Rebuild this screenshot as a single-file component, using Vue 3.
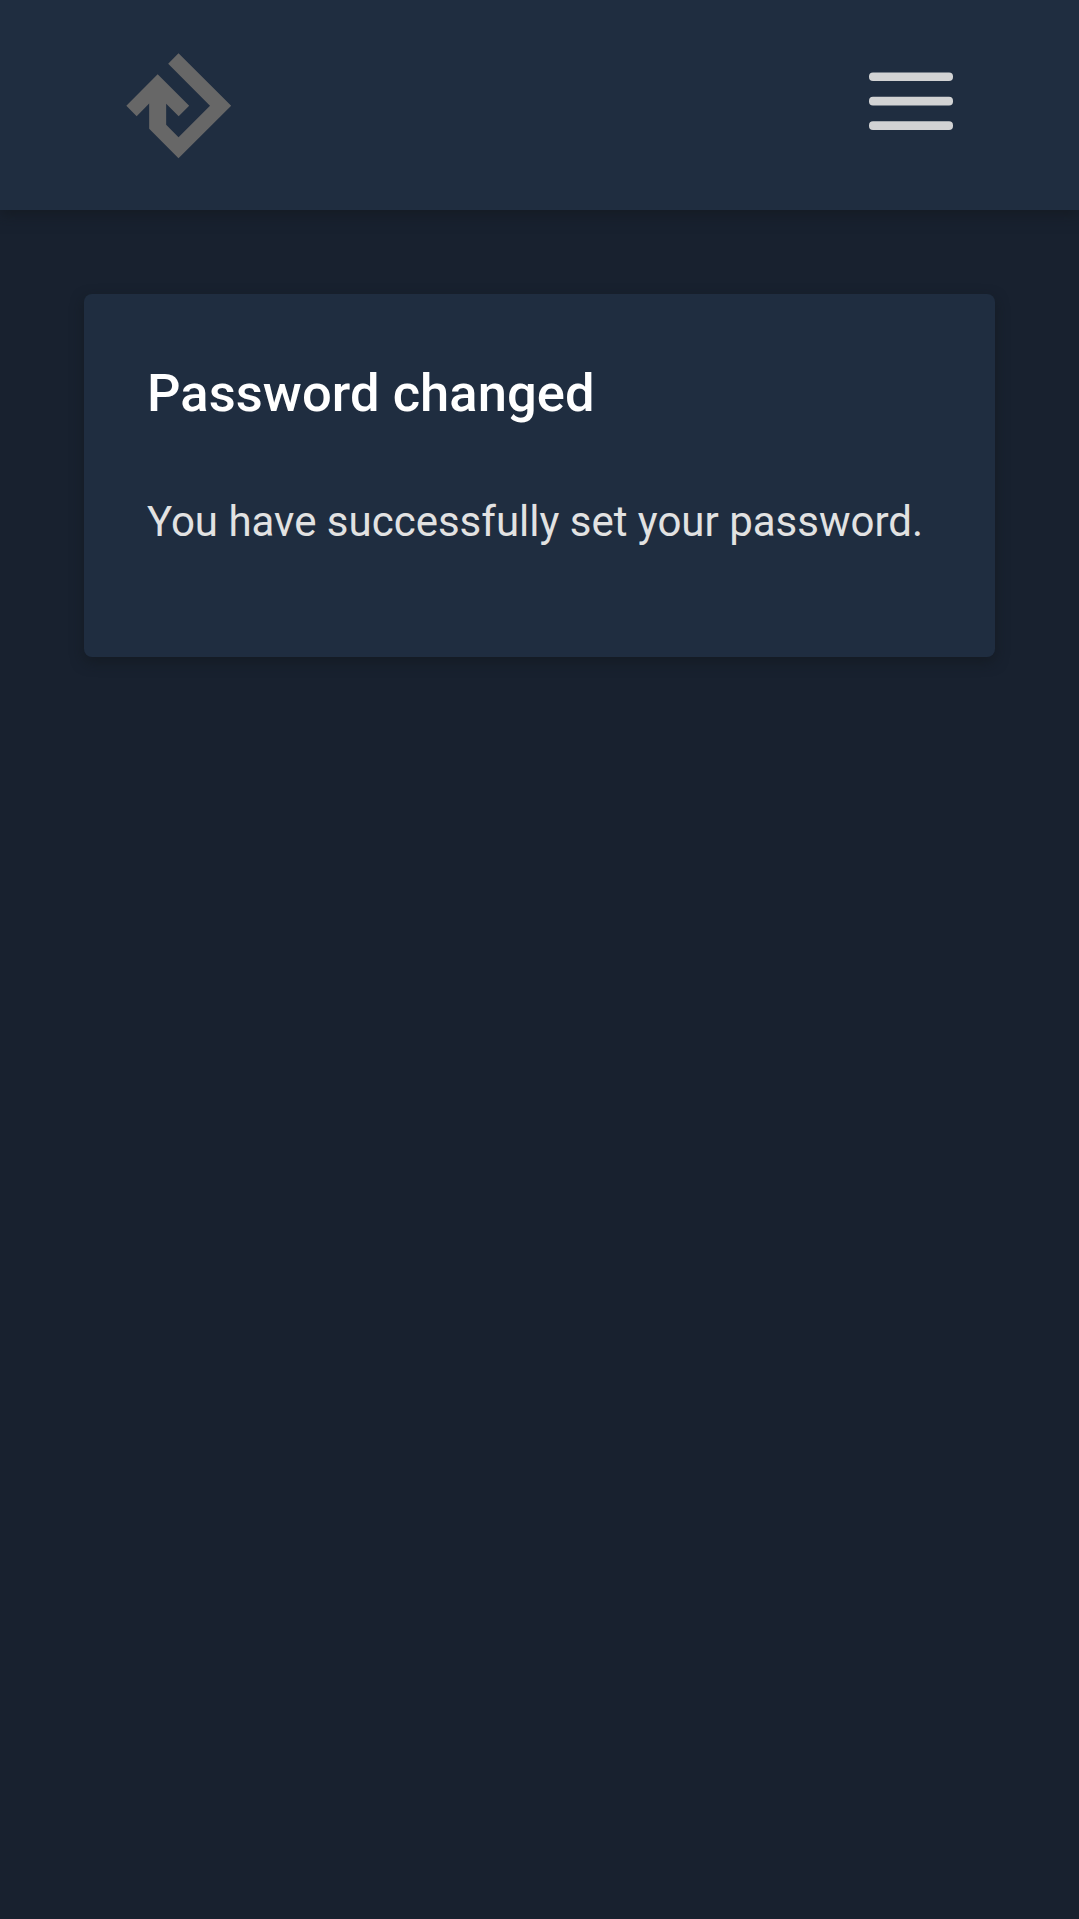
<script setup>
const title = 'Password changed'
const message = 'You have successfully set your password.'
const bars = [0, 24.4, 48.8]
</script>

<template>
  <div class="page">
    <header class="navbar">
      <a class="brand" aria-label="Home">
        <svg viewBox="-1 -0.5 315 315" width="105" height="105">
          <path d="M156.500 0 314.500 157.500 156.500 315.500 68.500 227V151L31 189 0 158 94 63.500 188.500 157.500 157 189 119.500 151.500V214.500L156.500 252 251 157.500 125.500 31.500Z" />
        </svg>
      </a>
      <button class="menu" aria-label="Menu">
        <svg viewBox="0 -0.4 84 59" width="84" height="59">
          <rect v-for="y in bars" :key="y" x="0" :y="y" width="84" height="8.7" rx="4" />
        </svg>
      </button>
    </header>
    <main class="content">
      <section class="card">
        <h1>{{ title }}</h1>
        <p>{{ message }}</p>
      </section>
    </main>
  </div>
</template>

<style>
body {
  background: #18212f;
}
</style>

<style scoped>
.page {
  min-height: 1919px;
  background: #18212f;
  font-family: Roboto, "Liberation Sans", sans-serif;
}
.navbar {
  box-sizing: border-box;
  height: 210px;
  padding: 0 126px;
  display: flex;
  align-items: center;
  justify-content: space-between;
  background: #1f2d40;
  box-shadow: 0 5px 13px rgba(18, 24, 29, 0.6);
}
.brand {
  display: block;
  height: 105px;
}
.brand svg {
  display: block;
  overflow: visible;
  fill: #676767;
}
.menu {
  width: 84px;
  height: 59px;
  margin: 0 0 7px;
  padding: 0;
  border: 0;
  background: none;
}
.menu svg {
  display: block;
  fill: #d2d3d4;
}
.content {
  padding: 84px;
}
.card {
  box-sizing: border-box;
  height: 363px;
  padding: 63px 0 0 63px;
  border-radius: 8px;
  background: #1f2d40;
  box-shadow: 0 5px 13px rgba(18, 24, 29, 0.6);
}
h1 {
  margin: 0;
  font-size: 52.5px;
  line-height: 72px;
  font-weight: 500;
  letter-spacing: 0.07px;
  color: #fff;
  white-space: nowrap;
}
p {
  margin: 61px 0 0;
  font-size: 42px;
  line-height: 63px;
  color: #e2e2e2;
  white-space: nowrap;
}
</style>
